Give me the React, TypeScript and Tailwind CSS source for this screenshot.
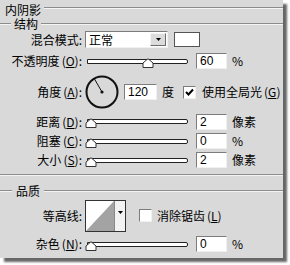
import React from 'react';

const font = "font-['SimSun','Noto_Sans_CJK_SC',sans-serif]";

function Etch({ className = '' }: { className?: string }) {
  return <div className={`h-[2px] border-t border-[#8c8c8c] border-b border-b-[#f4f4f4] ${className}`} />;
}

function Key({ k }: { k: string }) {
  return (
    <span className="ml-[2px]">
      (<span className="underline underline-offset-[1px]">{k}</span>)
    </span>
  );
}

function Field({ value, className = '' }: { value: string; className?: string }) {
  return (
    <div
      className={`h-[16px] w-[31px] bg-white border border-t-[#7c7c7c] border-l-[#7c7c7c] border-b-[#f0f0f0] border-r-[#f0f0f0] pl-[3px] text-[12px] leading-[14px] font-['Liberation_Sans',sans-serif] ${className}`}
    >
      {value}
    </div>
  );
}

function Slider({ pos }: { pos: number }) {
  return (
    <div className="relative ml-[5px] w-[101px] h-[5px] border border-[#222] bg-white rounded-r-[2px]">
      <svg
        className="absolute top-[-2px]"
        style={{ left: pos - 6 }}
        width="12"
        height="10"
        viewBox="0 0 12 10"
      >
        <path d="M1 9.5 V5 L6 0.7 L11 5 V9.5 Z" fill="#fff" stroke="#333" strokeWidth="1" />
      </svg>
    </div>
  );
}

function Label({ children }: { children: React.ReactNode }) {
  return <div className="w-[82px] text-right whitespace-nowrap">{children}</div>;
}

function Check({ checked, className = '' }: { checked?: boolean; className?: string }) {
  return (
    <div className={`w-[13px] h-[13px] bg-white border border-t-[#7c7c7c] border-l-[#7c7c7c] border-b-[#f0f0f0] border-r-[#f0f0f0] flex items-center justify-center ${className}`}>
      {checked && (
        <svg width="9" height="9" viewBox="0 0 9 9">
          <path d="M1 4 L3.5 6.5 L8 1.5" fill="none" stroke="#000" strokeWidth="2" />
        </svg>
      )}
    </div>
  );
}

function SliderRow({ label, value, unit, pos, h }: { label: React.ReactNode; value: string; unit: string; pos: number; h: string }) {
  return (
    <div className={`flex items-center ${h}`}>
      <Label>{label}</Label>
      <Slider pos={pos} />
      <Field value={value} className="ml-[8px]" />
      <span className="ml-[5px]">{unit}</span>
    </div>
  );
}

export default function App() {
  return (
    <div className={`w-[290px] h-[265px] bg-white text-[12px] leading-[12px] text-black ${font}`}>
      <div className="w-[283px] h-[258px] bg-[#d9d9d9] shadow-[4px_4px_2px_rgba(0,0,0,0.6)] flex flex-col">
        <div className="flex items-center h-[17px] pt-[1px]">
          <div className="pl-[5px] h-[11px] leading-[11px] overflow-visible">内阴影</div>
          <Etch className="flex-1 ml-[3px] mt-[-2px]" />
        </div>
        <div className="flex items-center h-[12px] pt-[1px]">
          <Etch className="w-[11px]" />
          <div className="px-[3px] h-[11px] leading-[11px]">结构</div>
          <Etch className="flex-1" />
        </div>

        <div className="flex items-center h-[21px]">
          <Label>混合模式:</Label>
          <div className="ml-[3px] w-[83px] h-[17px] bg-white border border-t-[#7c7c7c] border-l-[#7c7c7c] border-b-[#f0f0f0] border-r-[#f0f0f0] flex items-center">
            <span className="flex-1 pl-[3px]">正常</span>
            <div className="w-[16px] h-[13px] mr-[1px] bg-[#dcdcdc] border border-t-[#f4f4f4] border-l-[#f4f4f4] border-b-[#6c6c6c] border-r-[#6c6c6c] flex items-center justify-center">
              <svg width="5" height="3" viewBox="0 0 5 3">
                <path d="M0 0 H5 L2.5 3 Z" fill="#000" />
              </svg>
            </div>
          </div>
          <div className="ml-[6px] w-[26px] h-[15px] bg-white border border-[#555]" />
        </div>

        <SliderRow label={<>不透明度<Key k="O" />:</>} value="60" unit="%" pos={60} h="h-[22px]" />

        <div className="flex items-center h-[40px]">
          <Label>角度<Key k="A" />:</Label>
          <svg className="ml-[3px]" width="34" height="34" viewBox="0 0 34 34">
            <circle cx="17" cy="17" r="15.5" fill="none" stroke="#111" strokeWidth="2" />
            <line x1="17" y1="17" x2="9.5" y2="4" stroke="#111" strokeWidth="1" />
            <circle cx="17" cy="17" r="1.6" fill="#111" />
          </svg>
          <Field value="120" className="ml-[5px] w-[33px]" />
          <span className="ml-[5px]">度</span>
          <Check checked className="ml-[9px]" />
          <span className="ml-[6px] whitespace-nowrap">使用全局光<Key k="G" /></span>
        </div>

        <SliderRow label={<>距离<Key k="D" />:</>} value="2" unit="像素" pos={3} h="h-[19px]" />
        <SliderRow label={<>阻塞<Key k="C" />:</>} value="0" unit="%" pos={3} h="h-[20px]" />
        <SliderRow label={<>大小<Key k="S" />:</>} value="2" unit="像素" pos={3} h="h-[18px]" />

        <Etch className="mt-[5px]" />
        <div className="flex items-center h-[14px] mt-[8px]">
          <Etch className="w-[12px]" />
          <span className="px-[4px]">品质</span>
          <Etch className="flex-1" />
        </div>

        <div className="flex items-center h-[36px]">
          <Label>等高线:</Label>
          <div className="ml-[3px] w-[41px] h-[32px] border border-[#333] bg-white flex">
            <svg width="28" height="30" viewBox="0 0 28 30">
              <polygon points="0,30 28,0 28,30" fill="#a3a3a3" />
            </svg>
            <div className="flex-1 border-l border-[#888] bg-[#f2f2f2] flex justify-center pt-[10px]">
              <svg width="5" height="3" viewBox="0 0 5 3">
                <path d="M0 0 H5 L2.5 3 Z" fill="#000" />
              </svg>
            </div>
          </div>
          <Check className="ml-[13px] mt-[-2px]" />
          <span className="ml-[5px] whitespace-nowrap">消除锯齿<Key k="L" /></span>
        </div>

        <SliderRow label={<>杂色<Key k="N" />:</>} value="0" unit="%" pos={3} h="h-[20px]" />
      </div>
    </div>
  );
}
